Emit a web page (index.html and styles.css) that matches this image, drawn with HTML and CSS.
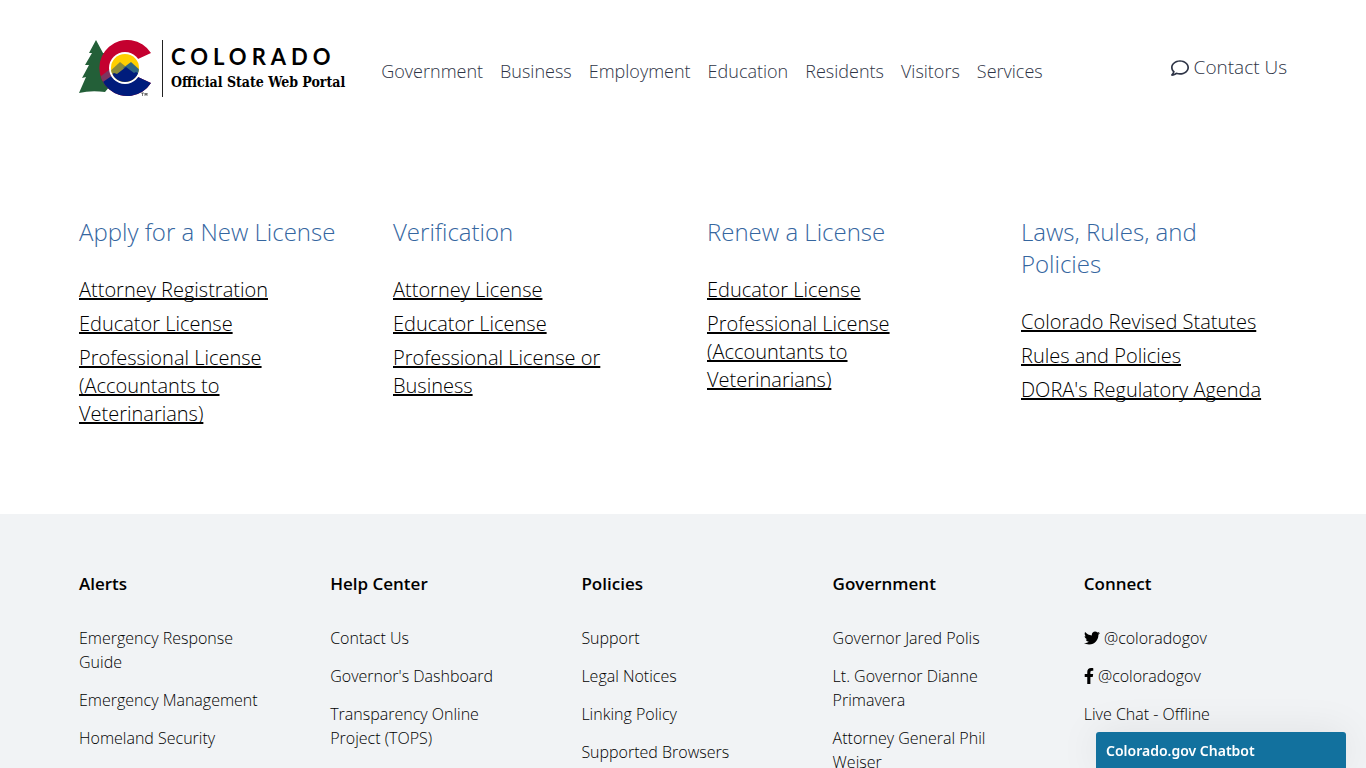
FILE: index.html
```html
<!DOCTYPE html>
<html lang="en">
<head>
  <meta charset="UTF-8">
  <meta name="viewport" content="width=device-width, initial-scale=1">
  <title>Licenses | Colorado Official State Web Portal</title>
  <link rel="stylesheet" href="styles.css">
</head>
<body>

<header class="site-header">
  <a class="logo" href="#">
    <svg class="logo-mark" viewBox="0 0 74 57" aria-hidden="true">
      <defs>
        <clipPath id="c-shape">
          <path d="M72 13 L59 19 V37 L72 43 A28 28 0 1 1 72 13Z"/>
        </clipPath>
        <clipPath id="sun">
          <circle cx="46" cy="28" r="14"/>
        </clipPath>
      </defs>
      <path fill="#235f38" d="M17 0 L10 13 L13 13 L6 25 L10 25 L3 38 L7 37 L0 53 Q12 50 26 52 L36 40 V14 L24 13Z"/>
      <g clip-path="url(#c-shape)">
        <rect x="14" y="0" width="60" height="57" fill="#c4002f"/>
        <path fill="#7d3560" d="M17 40 L31 29 L38 36 L22 48Z"/>
        <path fill="#001c7c" d="M18 46 L34 35 L46 36 L74 26 V57 H18Z"/>
      </g>
      <circle cx="46" cy="28" r="16" fill="#fff"/>
      <g clip-path="url(#sun)">
        <rect x="30" y="12" width="34" height="34" fill="#ffcf00"/>
        <path fill="#8b8b3a" d="M28 34 L41 22 L46 26 L50 34Z"/>
        <path fill="#2e6583" d="M44 28 L52 22 L64 33 V40Z"/>
        <path fill="#001c7c" d="M30 36 L35 33 L38 34 L47 27 L55 33 L57 32 L64 36 V46 H30Z"/>
      </g>
      <path fill="none" stroke="#222" stroke-width="0.600" d="M62 53 H65 M63.500 53 V56 M66 56 V53 L67 55 L68 53 V56"/>
    </svg>
    <span class="logo-text">
      <span class="logo-name">COLORADO</span>
      <span class="logo-tag">Official State Web Portal</span>
    </span>
  </a>
  <nav class="main-nav">
    <a href="#">Government</a>
    <a href="#">Business</a>
    <a href="#">Employment</a>
    <a href="#">Education</a>
    <a href="#">Residents</a>
    <a href="#">Visitors</a>
    <a href="#">Services</a>
  </nav>
  <a class="contact" href="#">
    <svg class="icon-comment" viewBox="0 0 512 512" aria-hidden="true"><path fill="currentColor" d="M256 32C114.600 32 0 125.100 0 240c0 47.600 19.900 91.200 52.900 126.300C38 405.700 7 439.100 6.500 439.500c-6.600 7-8.400 17.200-4.600 26S14.400 480 24 480c61.500 0 110-25.700 139.100-46.300C192 442.800 223.200 448 256 448c141.400 0 256-93.100 256-208S397.400 32 256 32zm0 368c-26.700 0-53.100-4.100-78.400-12.100l-22.700-7.200-19.500 13.800c-14.300 10.100-33.900 21.400-57.500 29 7.300-12.100 14.400-25.700 19.900-40.200l10.600-28.100-20.600-21.800C69.700 314.100 48 282.200 48 240c0-88.200 93.300-160 208-160s208 71.800 208 160-93.300 160-208 160z"/></svg>
    Contact Us
  </a>
</header>

<main class="licenses">
  <section>
    <h2>Apply for a New License</h2>
    <ul>
      <li><a href="#">Attorney Registration</a></li>
      <li><a href="#">Educator License</a></li>
      <li><a href="#">Professional License (Accountants to Veterinarians)</a></li>
    </ul>
  </section>
  <section>
    <h2>Verification</h2>
    <ul>
      <li><a href="#">Attorney License</a></li>
      <li><a href="#">Educator License</a></li>
      <li><a href="#">Professional License or Business</a></li>
    </ul>
  </section>
  <section>
    <h2>Renew a License</h2>
    <ul>
      <li><a href="#">Educator License</a></li>
      <li><a href="#">Professional License (Accountants to Veterinarians)</a></li>
    </ul>
  </section>
  <section>
    <h2>Laws, Rules, and Policies</h2>
    <ul>
      <li><a href="#">Colorado Revised Statutes</a></li>
      <li><a href="#">Rules and Policies</a></li>
      <li><a href="#">DORA's Regulatory Agenda</a></li>
    </ul>
  </section>
</main>

<footer class="site-footer">
  <section>
    <h3>Alerts</h3>
    <ul>
      <li><a href="#">Emergency Response Guide</a></li>
      <li><a href="#">Emergency Management</a></li>
      <li><a href="#">Homeland Security</a></li>
    </ul>
  </section>
  <section>
    <h3>Help Center</h3>
    <ul>
      <li><a href="#">Contact Us</a></li>
      <li><a href="#">Governor's Dashboard</a></li>
      <li><a href="#">Transparency Online Project (TOPS)</a></li>
    </ul>
  </section>
  <section>
    <h3>Policies</h3>
    <ul>
      <li><a href="#">Support</a></li>
      <li><a href="#">Legal Notices</a></li>
      <li><a href="#">Linking Policy</a></li>
      <li><a href="#">Supported Browsers</a></li>
    </ul>
  </section>
  <section>
    <h3>Government</h3>
    <ul>
      <li><a href="#">Governor Jared Polis</a></li>
      <li><a href="#">Lt. Governor Dianne Primavera</a></li>
      <li><a href="#">Attorney General Phil Weiser</a></li>
    </ul>
  </section>
  <section>
    <h3>Connect</h3>
    <ul>
      <li><a href="#"><svg class="icon-twitter" viewBox="0 0 512 512" aria-hidden="true"><path fill="currentColor" d="M459.370 151.716c.325 4.548.325 9.097.325 13.645 0 138.720-105.583 298.558-298.558 298.558-59.452 0-114.680-17.219-161.137-47.106 8.447.974 16.568 1.299 25.340 1.299 49.055 0 94.213-16.568 130.274-44.832-46.132-.975-84.792-31.188-98.112-72.772 6.498.974 12.995 1.624 19.818 1.624 9.421 0 18.843-1.300 27.614-3.573-48.081-9.747-84.143-51.980-84.143-102.985v-1.299c13.969 7.797 30.214 12.670 47.431 13.319-28.264-18.843-46.781-51.005-46.781-87.391 0-19.492 5.197-37.360 14.294-52.954 51.655 63.675 129.300 105.258 216.365 109.807-1.624-7.797-2.599-15.918-2.599-24.040 0-57.828 46.782-104.934 104.934-104.934 30.213 0 57.502 12.670 76.670 33.137 23.715-4.548 46.456-13.320 66.599-25.340-7.798 24.366-24.366 44.833-46.132 57.827 21.117-2.273 41.584-8.122 60.426-16.243-14.292 20.791-32.161 39.308-52.628 54.253z"/></svg> @coloradogov</a></li>
      <li><a href="#"><svg class="icon-facebook" viewBox="0 0 320 512" aria-hidden="true"><path fill="currentColor" d="M279.140 288l14.220-92.660h-88.910v-60.130c0-25.350 12.420-50.060 52.240-50.060h40.420V6.260S260.430 0 225.360 0c-73.220 0-121.080 44.380-121.080 124.720v70.620H22.890V288h81.390v224h100.170V288z"/></svg> @coloradogov</a></li>
      <li><a href="#">Live Chat - Offline</a></li>
    </ul>
  </section>
</footer>

<button class="chatbot" type="button">Colorado.gov Chatbot</button>

</body>
</html>
```
FILE: styles.css
```css
* {
  box-sizing: border-box;
}
body {
  margin: 0;
  font-family: "Open Sans", "Noto Sans", sans-serif;
  font-weight: 300;
  color: #000;
  background: #fff;
}
h2, h3, ul {
  margin: 0;
  padding: 0;
}
ul {
  list-style: none;
}
a {
  color: #000;
  text-decoration: none;
}

/* header */
.site-header {
  display: flex;
  align-items: flex-start;
  padding: 40px 79px 0;
}
.logo {
  display: flex;
  height: 57px;
}
.logo-mark {
  width: 74px;
  height: 57px;
}
.logo-text {
  display: flex;
  flex-direction: column;
  margin-left: 9px;
  padding: 4px 0 0 8px;
  border-left: 1px solid #222;
}
.logo-name {
  font-family: Lato, sans-serif;
  font-size: 22px;
  font-weight: 700;
  line-height: 26px;
  letter-spacing: 5px;
}
.logo-tag {
  font-family: "DejaVu Serif Condensed", "DejaVu Serif", serif;
  font-size: 14px;
  font-weight: 700;
  font-stretch: condensed;
  line-height: 24px;
}
.main-nav {
  display: flex;
  gap: 17px;
  margin-left: 36px;
  padding-top: 19px;
}
.main-nav a, .contact {
  font-size: 18px;
  line-height: 24px;
  color: #2e3446;
}
.contact {
  margin: 15px 0 0 auto;
  font-size: 19px;
}
.icon-comment {
  width: 18px;
  height: 18px;
  vertical-align: -3px;
}

/* license links */
.licenses {
  display: grid;
  grid-template-columns: repeat(4, 1fr);
  column-gap: 48px;
  padding: 119px 79px 80px;
}
.licenses section, .site-footer section {
  padding-right: 8px;
}
.licenses h2 {
  margin-bottom: 28px;
  font-size: 24px;
  font-weight: 300;
  line-height: 32px;
  color: #35669f;
}
.licenses li {
  margin-bottom: 6px;
  font-size: 20px;
  line-height: 28px;
}
.licenses a {
  text-decoration: underline;
  text-decoration-skip-ink: none;
}

/* footer */
.site-footer {
  display: grid;
  grid-template-columns: repeat(5, 1fr);
  column-gap: 48px;
  padding: 58px 79px;
  background: #f1f3f5;
}
.site-footer h3 {
  margin-bottom: 30px;
  font-size: 17px;
  font-weight: 600;
  line-height: 24px;
}
.site-footer li {
  margin-bottom: 14px;
  font-size: 16px;
  line-height: 24px;
}
.icon-twitter {
  width: 16px;
  height: 16px;
  vertical-align: -2px;
}
.icon-facebook {
  width: 10px;
  height: 16px;
  vertical-align: -2px;
}

/* chat */
.chatbot {
  position: fixed;
  right: 20px;
  bottom: 0;
  width: 250px;
  height: 36px;
  padding: 0 10px;
  border: none;
  border-radius: 3px 3px 0 0;
  background: #12719e;
  box-shadow: 0 0 40px rgba(0, 0, 0, 0.08);
  color: #fff;
  font-family: "Noto Sans", sans-serif;
  font-size: 14px;
  font-weight: 600;
  text-align: left;
  cursor: pointer;
}
```
